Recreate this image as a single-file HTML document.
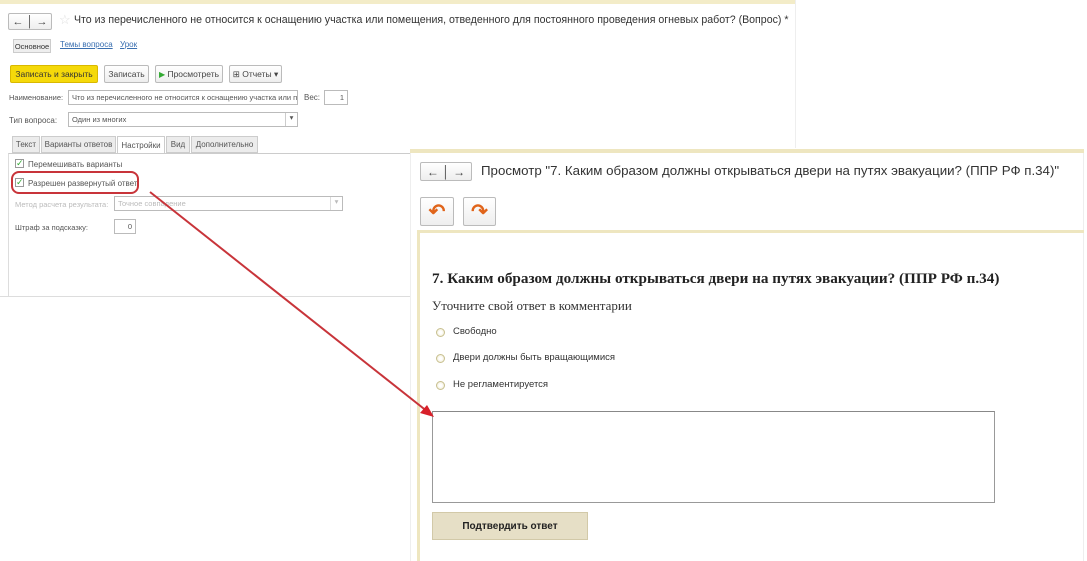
<!DOCTYPE html>
<html><head><meta charset="utf-8"><style>
*{box-sizing:border-box;margin:0;padding:0}
body{width:1087px;height:561px;background:#fff;position:relative;overflow:hidden;font-family:"Liberation Sans",sans-serif;color:#333}
.a{position:absolute}
.btn{position:absolute;border:1px solid #bbb;background:linear-gradient(#fff,#eee);border-radius:2px;font-size:8.5px;color:#444;display:flex;align-items:center;justify-content:center;white-space:nowrap}
.lbl{position:absolute;font-size:8px;color:#555;white-space:nowrap}
.inp{position:absolute;border:1px solid #bbb;background:#fff;font-size:7.5px;color:#555;padding:2px 3px;white-space:nowrap;overflow:hidden}
.tab{position:absolute;top:136px;height:17px;border:1px solid #ccc;background:#ececec;font-size:8px;color:#555;display:flex;align-items:center;justify-content:center}
.radio{position:absolute;width:9px;height:9px;border-radius:50%;border:1px solid #c8c090;background:radial-gradient(#fff 30%,#e8e2c0)}
.rt{position:absolute;font-size:9.5px;color:#333}
</style></head><body>
<div class="a" style="left:0;top:0;width:795px;height:4px;background:#f3ecc8"></div>
<div class="a" style="left:795px;top:0;width:1px;height:148px;background:#eee"></div>
<div class="a" style="left:0;top:296px;width:410px;height:1px;background:#ddd"></div>
<div class="btn" style="left:8px;top:13px;width:44px;height:17px;font-size:11px">←&nbsp;│&nbsp;→</div>
<div class="a" style="left:59px;top:12px;font-size:13px;color:#ddd">☆</div>
<div class="a" style="left:74px;top:14px;font-size:10.6px;color:#333;white-space:nowrap">Что из перечисленного не относится к оснащению участка или помещения, отведенного для постоянного проведения огневых работ? (Вопрос) *</div>
<div class="a" style="left:13px;top:39px;width:38px;height:14px;border:1px solid #ccc;background:#eee;font-size:7.5px;display:flex;align-items:center;justify-content:center">Основное</div>
<div class="a" style="left:60px;top:40px;font-size:8px;color:#3a6fb0;text-decoration:underline">Темы вопроса</div>
<div class="a" style="left:120px;top:40px;font-size:8px;color:#3a6fb0;text-decoration:underline">Урок</div>
<div class="btn" style="left:10px;top:65px;width:88px;height:18px;background:#f5d90a;border-color:#d9b800;color:#333">Записать и закрыть</div>
<div class="btn" style="left:104px;top:65px;width:45px;height:18px">Записать</div>
<div class="btn" style="left:155px;top:65px;width:68px;height:18px"><span style="color:#3a3;font-size:8px">▶</span>&nbsp;Просмотреть</div>
<div class="btn" style="left:229px;top:65px;width:53px;height:18px">⊞ Отчеты ▾</div>
<div class="lbl" style="left:9px;top:93px;font-size:7.5px">Наименование:</div>
<div class="inp" style="left:68px;top:90px;width:230px;height:15px">Что из перечисленного не относится к оснащению участка или п</div>
<div class="lbl" style="left:304px;top:93px">Вес:</div>
<div class="inp" style="left:324px;top:90px;width:24px;height:15px;text-align:right">1</div>
<div class="lbl" style="left:9px;top:116px">Тип вопроса:</div>
<div class="inp" style="left:68px;top:112px;width:230px;height:15px">Один из многих<span style="position:absolute;right:0;top:0;width:12px;height:13px;border-left:1px solid #ccc;text-align:center">▾</span></div>
<div class="tab" style="left:12px;width:28px">Текст</div>
<div class="tab" style="left:41px;width:75px">Варианты ответов</div>
<div class="tab" style="left:117px;width:48px;background:#fff;border-bottom-color:#fff;height:18px">Настройки</div>
<div class="tab" style="left:166px;width:24px">Вид</div>
<div class="tab" style="left:191px;width:67px">Дополнительно</div>
<div class="a" style="left:8px;top:153px;width:402px;height:143px;border-top:1px solid #ccc;border-left:1px solid #ddd"></div>
<div class="a" style="left:15px;top:159px;width:9px;height:9px;border:1px solid #999;background:#fff;font-size:9px;line-height:7px;color:#3a3">✓</div>
<div class="lbl" style="left:28px;top:160px">Перемешивать варианты</div>
<div class="a" style="left:15px;top:178px;width:9px;height:9px;border:1px solid #999;background:#fff;font-size:9px;line-height:7px;color:#3a3">✓</div>
<div class="lbl" style="left:28px;top:179px">Разрешен развернутый ответ</div>
<div class="a" style="left:11px;top:171px;width:128px;height:23px;border:2px solid #c8343a;border-radius:8px"></div>
<div class="lbl" style="left:15px;top:200px;color:#bbb;font-size:7.5px">Метод расчета результата:</div>
<div class="inp" style="left:114px;top:196px;width:229px;height:15px;color:#bbb">Точное совпадение<span style="position:absolute;right:0;top:0;width:12px;height:13px;border-left:1px solid #ddd;text-align:center">▾</span></div>
<div class="lbl" style="left:15px;top:223px;font-size:7.5px">Штраф за подсказку:</div>
<div class="inp" style="left:114px;top:219px;width:22px;height:15px;text-align:right">0</div>
<div class="a" style="left:410px;top:149px;width:674px;height:412px;background:#fff;border-left:1px solid #eee;border-right:1px solid #eee"></div>
<div class="a" style="left:410px;top:149px;width:674px;height:4px;background:#eee6c0"></div>
<div class="btn" style="left:420px;top:162px;width:52px;height:19px;font-size:12px">←&nbsp;│&nbsp;→</div>
<div class="a" style="left:481px;top:163px;font-size:13.3px;color:#333;white-space:nowrap">Просмотр "7. Каким образом должны открываться двери на путях эвакуации? (ППР РФ п.34)"</div>
<div class="btn" style="left:420px;top:197px;width:34px;height:29px;font-size:20px;color:#e0641a;font-weight:bold">↶</div>
<div class="btn" style="left:463px;top:197px;width:33px;height:29px;font-size:20px;color:#e0641a;font-weight:bold">↷</div>
<div class="a" style="left:417px;top:230px;width:667px;height:331px;border-top:3px solid #eee6c0;border-left:3px solid #eee6c0"></div>
<div class="a" style="left:432px;top:270px;font-family:'Liberation Serif',serif;font-weight:bold;font-size:15.2px;color:#222;white-space:nowrap">7. Каким образом должны открываться двери на путях эвакуации? (ППР РФ п.34)</div>
<div class="a" style="left:432px;top:298px;font-family:'Liberation Serif',serif;font-size:13px;color:#333;white-space:nowrap">Уточните свой ответ в комментарии</div>
<div class="radio" style="left:436px;top:328px"></div><div class="rt" style="left:453px;top:326px">Свободно</div>
<div class="radio" style="left:436px;top:354px"></div><div class="rt" style="left:453px;top:352px">Двери должны быть вращающимися</div>
<div class="radio" style="left:436px;top:381px"></div><div class="rt" style="left:453px;top:379px">Не регламентируется</div>
<div class="a" style="left:432px;top:411px;width:563px;height:92px;border:1px solid #999;border-top-color:#888;background:#fff"></div>
<div class="a" style="left:432px;top:512px;width:156px;height:28px;background:#e6dfc6;border:1px solid #d2c9a8;font-size:10px;font-weight:bold;color:#222;display:flex;align-items:center;justify-content:center">Подтвердить ответ</div>
<svg class="a" style="left:0;top:0" width="1087" height="561"><line x1="150" y1="192" x2="428" y2="412" stroke="#c8343a" stroke-width="2"/><polygon points="434,417 420,413 427,405" fill="#d8202a"/></svg>
</body></html>
